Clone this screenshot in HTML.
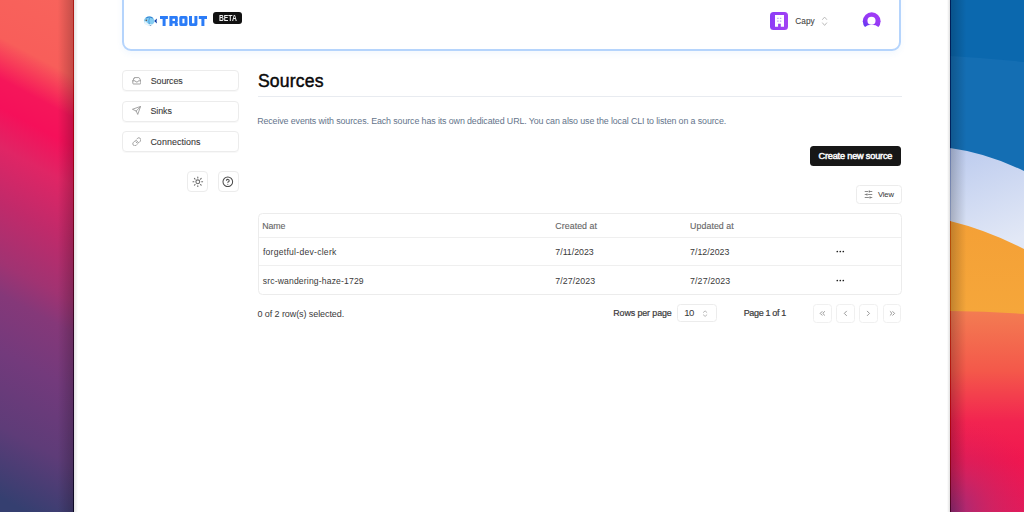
<!DOCTYPE html>
<html><head><meta charset="utf-8">
<style>
*{box-sizing:border-box;margin:0;padding:0}
html,body{width:1024px;height:512px;overflow:hidden;background:#fff;font-family:"Liberation Sans",sans-serif;}
.abs{position:absolute}
#wl{position:absolute;left:0;top:0;width:74px;height:512px}
#wr{position:absolute;left:950px;top:0;width:74px;height:512px}
#panel{position:absolute;left:74px;top:0;width:876px;height:512px;background:#fff}
#hdr{position:absolute;left:122.3px;top:-20px;width:778.9px;height:71.4px;border:2px solid #b5d4fc;border-radius:9px;background:#fff;box-shadow:0 3px 6px rgba(59,130,246,0.06)}
.nav{position:absolute;left:122px;width:117px;height:21px;border:1px solid #ececec;border-radius:4px;box-shadow:0 1px 1px rgba(0,0,0,0.03)}
.nav span{position:absolute;left:28px;top:4.6px;font-size:8.6px;color:#3a3a3a;white-space:nowrap}
.nav svg{position:absolute;left:9px;top:5px}
.ib{position:absolute;top:171px;width:21px;height:21px;border:1px solid #ececec;border-radius:4px}
.txt{position:absolute;white-space:nowrap;line-height:1}
</style></head><body>
<svg id="wl" width="74" height="512" viewBox="0 0 74 512">
  <defs>
    <linearGradient id="lg1" gradientUnits="userSpaceOnUse" x1="18.8" y1="-35.2" x2="-206.8" y2="387.2">
      <stop offset="0" stop-color="#f8645c"/>
      <stop offset="0.152" stop-color="#f85e5a"/>
      <stop offset="0.19" stop-color="#f73a59"/>
      <stop offset="0.228" stop-color="#f5165a"/>
      <stop offset="0.281" stop-color="#f5105a"/>
      <stop offset="0.354" stop-color="#e02565"/>
      <stop offset="0.458" stop-color="#c02a6a"/>
      <stop offset="0.567" stop-color="#a03372"/>
      <stop offset="0.625" stop-color="#853879"/>
      <stop offset="0.731" stop-color="#733a7c"/>
      <stop offset="0.869" stop-color="#5e3c78"/>
      <stop offset="0.933" stop-color="#4a3d74"/>
      <stop offset="1" stop-color="#353f70"/>
    </linearGradient>
    <linearGradient id="lsh" x1="0" y1="0" x2="1" y2="0">
      <stop offset="0" stop-color="#000" stop-opacity="0"/>
      <stop offset="0.78" stop-color="#000" stop-opacity="0"/>
      <stop offset="1" stop-color="#000" stop-opacity="0.22"/>
    </linearGradient>
    <filter id="dk2" x="0" y="0" width="1" height="1" color-interpolation-filters="sRGB">
      <feComponentTransfer>
        <feFuncR type="gamma" amplitude="0.72" exponent="2.0" offset="0"/>
        <feFuncG type="gamma" amplitude="0.72" exponent="2.0" offset="0"/>
        <feFuncB type="gamma" amplitude="0.72" exponent="2.0" offset="0"/>
      </feComponentTransfer>
    </filter>
    <clipPath id="lline"><rect x="73" y="0" width="1" height="512"/></clipPath>
  </defs>
  <rect id="wpl" width="74" height="512" fill="url(#lg1)"/>
  <rect width="74" height="512" fill="url(#lsh)"/>
  <g clip-path="url(#lline)"><use href="#wpl" filter="url(#dk2)"/></g>
</svg>
<svg id="wr" width="74" height="512" viewBox="0 0 74 512">
  <defs>
    <linearGradient id="rsh" x1="0" y1="0" x2="1" y2="0">
      <stop offset="0" stop-color="#000" stop-opacity="0.22"/>
      <stop offset="0.22" stop-color="#000" stop-opacity="0"/>
      <stop offset="1" stop-color="#000" stop-opacity="0"/>
    </linearGradient>
    <linearGradient id="rlav" gradientUnits="userSpaceOnUse" x1="0" y1="150" x2="40" y2="250">
      <stop offset="0" stop-color="#bccbee"/>
      <stop offset="1" stop-color="#e2e8f6"/>
    </linearGradient>
    <linearGradient id="rora" x1="0" y1="0" x2="0" y2="1">
      <stop offset="0" stop-color="#f4a036"/>
      <stop offset="1" stop-color="#f8b444"/>
    </linearGradient>
    <linearGradient id="rred" gradientUnits="userSpaceOnUse" x1="0" y1="311" x2="0" y2="512">
      <stop offset="0" stop-color="#f37c52"/>
      <stop offset="0.3" stop-color="#f4584a"/>
      <stop offset="0.55" stop-color="#f22450"/>
      <stop offset="0.75" stop-color="#f0164f"/>
      <stop offset="1" stop-color="#e41a5a"/>
    </linearGradient>
    <radialGradient id="rbot" gradientUnits="userSpaceOnUse" cx="0" cy="512" r="95">
      <stop offset="0" stop-color="#9a2c7a" stop-opacity="1"/>
      <stop offset="0.45" stop-color="#c02868" stop-opacity="0.55"/>
      <stop offset="1" stop-color="#e01c58" stop-opacity="0"/>
    </radialGradient>
    <filter id="dk" x="0" y="0" width="1" height="1" color-interpolation-filters="sRGB">
      <feComponentTransfer>
        <feFuncR type="gamma" amplitude="0.78" exponent="2.1" offset="0"/>
        <feFuncG type="gamma" amplitude="0.78" exponent="2.1" offset="0"/>
        <feFuncB type="gamma" amplitude="0.78" exponent="2.1" offset="0"/>
      </feComponentTransfer>
    </filter>
    <clipPath id="rline"><rect x="0" y="0" width="1" height="512"/></clipPath>
  </defs>
  <g id="wpr">
  <rect width="74" height="512" fill="#0b68ae"/>
  <path d="M0 56 Q37 58 74 62 L74 512 L0 512Z" fill="#146eb3"/>
  <path d="M0 148 Q37 153 74 171 L74 512 L0 512Z" fill="url(#rlav)"/>
  <path d="M0 221 Q37 230 74 249 L74 512 L0 512Z" fill="url(#rora)"/>
  <path d="M0 311 Q37 311 74 314 L74 512 L0 512Z" fill="url(#rred)"/>
  <rect y="300" width="74" height="212" fill="url(#rbot)"/>
  </g>
  <rect width="74" height="512" fill="url(#rsh)"/>
  <g clip-path="url(#rline)"><use href="#wpr" filter="url(#dk)"/></g>
</svg>

<div id="panel"></div>
<div class="abs" style="left:946.5px;top:0;width:3.5px;height:512px;background:linear-gradient(90deg,rgba(0,0,0,0),rgba(0,0,0,0.12))"></div>
<div class="abs" style="left:74px;top:0;width:3.5px;height:512px;background:linear-gradient(270deg,rgba(0,0,0,0),rgba(0,0,0,0.11))"></div>
<div id="hdr"></div>

<!-- sidebar -->
<div class="nav" style="top:70.2px"></div>
<div class="txt" style="left:150.82px;top:76.9px;font-size:8.9px;color:#3a3a3a;letter-spacing:-0.112px;-webkit-text-stroke:0.1px #3a3a3a">Sources</div>
<svg class="abs" style="left:131.9px;top:76px" width="9.6" height="9.6" viewBox="0 0 24 24" fill="none" stroke="#8a8a8a" stroke-width="2" stroke-linecap="round" stroke-linejoin="round"><polyline points="22 12 16 12 14 15 10 15 8 12 2 12"/><path d="M5.45 5.11 2 12v6a2 2 0 0 0 2 2h16a2 2 0 0 0 2-2v-6l-3.45-6.89A2 2 0 0 0 16.76 4H7.24a2 2 0 0 0-1.79 1.11z"/></svg>
<div class="nav" style="top:100.8px"></div>
<div class="txt" style="left:150.52px;top:107.2px;font-size:8.9px;color:#3a3a3a;letter-spacing:-0.075px;-webkit-text-stroke:0.1px #3a3a3a">Sinks</div>
<svg class="abs" style="left:132.3px;top:106.4px" width="9.2" height="9.2" viewBox="0 0 24 24" fill="none" stroke="#8a8a8a" stroke-width="2" stroke-linecap="round" stroke-linejoin="round"><path d="m22 2-7 20-4-9-9-4Z"/><path d="M22 2 11 13"/></svg>
<div class="nav" style="top:131.2px"></div>
<div class="txt" style="left:150.4px;top:137.7px;font-size:8.9px;color:#3a3a3a;letter-spacing:0.07px;-webkit-text-stroke:0.1px #3a3a3a">Connections</div>
<svg class="abs" style="left:131.75px;top:136.65px" width="9.7" height="9.7" viewBox="0 0 24 24" fill="none" stroke="#8a8a8a" stroke-width="2" stroke-linecap="round" stroke-linejoin="round"><path d="M10 13a5 5 0 0 0 7.54.54l3-3a5 5 0 0 0-7.07-7.07l-1.72 1.71"/><path d="M14 11a5 5 0 0 0-7.54-.54l-3 3a5 5 0 0 0 7.07 7.07l1.71-1.71"/></svg>
<div class="ib" style="left:187.3px"></div>
<svg class="abs" style="left:192px;top:175.5px" width="11.6" height="11.6" viewBox="0 0 24 24" fill="none" stroke="#6a6a6a" stroke-width="2.2" stroke-linecap="round" stroke-linejoin="round"><circle cx="12" cy="12" r="4"/><path d="M12 2v2"/><path d="M12 20v2"/><path d="m4.93 4.93 1.41 1.41"/><path d="m17.66 17.66 1.41 1.41"/><path d="M2 12h2"/><path d="M20 12h2"/><path d="m6.34 17.66-1.41 1.41"/><path d="m19.07 4.93-1.41 1.41"/></svg>
<div class="ib" style="left:218px"></div>
<svg class="abs" style="left:222.1px;top:175.8px" width="11.6" height="11.6" viewBox="0 0 24 24" fill="none" stroke="#4a4a4a" stroke-width="2.1" stroke-linecap="round" stroke-linejoin="round"><circle cx="12" cy="12" r="10"/><path d="M9.09 9a3 3 0 0 1 5.83 1c0 2-3 3-3 3"/><path d="M12 17h.01"/></svg>

<!-- header -->
<svg class="abs" style="left:143px;top:15px" width="15" height="12" viewBox="0 0 15 12">
  <path d="M11 5.9 L14 3.6 Q13.1 5.9 14 8.4Z" fill="#0c3aa6"/>
  <ellipse cx="6.2" cy="5.9" rx="5.3" ry="4.5" fill="#86cdf2"/>
  <path d="M2.6 3 Q6.2 0.2 10.2 3 Q9.8 3.6 9.2 3.4 Q6.2 1.6 3.4 3.6Z" fill="#2f7fd0"/>
  <path d="M1 6.4 Q1.5 10.4 6 10.4 Q8.5 10.3 9.5 9.2 Q5.5 9.6 3.8 7.4 Q2.5 6 1 6.4Z" fill="#eaf5fb"/>
  <path d="M6.6 2.6 Q5.1 5.9 6.4 9.2" stroke="#4aa0e0" stroke-width="1" fill="none"/>
  <circle cx="3.3" cy="5.3" r="0.8" fill="#6a4a3a"/>
  <path d="M6.5 10.2 Q7.5 11.2 8.6 10.1Z" fill="#2a5a9a"/>
</svg>
<svg class="abs" style="left:160px;top:16.3px" width="48" height="10.3" viewBox="0 0 48 10" preserveAspectRatio="none"><path fill="#2b7cf7" fill-rule="evenodd" d="M0 0H7.9V2.8H5.6V9.6H2.6V2.8H0Z M9.4 0H16.4Q17.8 0 17.8 1.4V5.1Q17.8 5.8 17.1 6.1Q17.8 6.4 17.8 7.1V9.6H14.8V7.2H12.5V9.6H9.4Z M12.5 2.6H15V4.8H12.5Z M20.8 0H26Q27.5 0 27.5 1.5V8.1Q27.5 9.6 26 9.6H20.8Q19.3 9.6 19.3 8.1V1.5Q19.3 0 20.8 0Z M22.4 2.6V7H24.5V2.6Z M29 0H32V7H34.4V0H37.4V8.1Q37.4 9.6 35.9 9.6H30.5Q29 9.6 29 8.1Z M38.8 0H47V2.8H44.4V9.6H41.4V2.8H38.8Z"/></svg>
<div class="abs" style="left:212.6px;top:12.3px;width:29.4px;height:11.7px;background:#111;border-radius:3px"></div>
<div class="txt" style="left:218.6px;top:15.2px;font-size:8.2px;font-weight:bold;color:#f0f0f0;letter-spacing:0px;transform:scaleX(0.82);transform-origin:0 0">BETA</div>

<div class="abs" style="left:770px;top:12.2px;width:18px;height:18px;border-radius:3.5px;background:linear-gradient(100deg,#8b3cf7,#a443f3)">
<svg width="18" height="18" viewBox="0 0 18 18" style="position:absolute;left:0;top:0">
  <path d="M5 2.9 H14 V14.7 H10.8 V11.8 H8.1 V14.7 H5 Z" fill="#fff"/>
  <rect x="7.2" y="5.8" width="1.4" height="1" fill="#a98af5"/>
  <rect x="9.9" y="5.8" width="1.4" height="1" fill="#a98af5"/>
  <rect x="7.2" y="8.6" width="1.4" height="1" fill="#a98af5"/>
  <rect x="9.9" y="8.6" width="1.4" height="1" fill="#a98af5"/>
</svg></div>
<div class="txt" style="left:795.22px;top:17.0px;font-size:8.3px;color:#444;letter-spacing:0.033px;-webkit-text-stroke:0.08px #444">Capy</div>
<svg class="abs" style="left:820px;top:15px" width="9" height="12" viewBox="0 0 9 12">
  <path d="M2.5 4.5 L4.6 2.1 L6.7 4.5 M2.5 7.9 L4.6 10.4 L6.7 7.9" stroke="#b0b0b0" stroke-width="0.85" fill="none" stroke-linecap="round" stroke-linejoin="round"/>
</svg>
<svg class="abs" style="left:862px;top:12px" width="19" height="19" viewBox="0 0 19 19">
  <defs>
    <linearGradient id="av" x1="0.7" y1="0" x2="0.1" y2="0.9">
      <stop offset="0" stop-color="#a33cf6"/>
      <stop offset="0.55" stop-color="#9238f5"/>
      <stop offset="1" stop-color="#5238f0"/>
    </linearGradient>
  </defs>
  <circle cx="9.7" cy="9.2" r="8.9" fill="url(#av)"/>
  <circle cx="9.5" cy="8.7" r="4.05" fill="#fff"/>
  <ellipse cx="9.7" cy="21" rx="10" ry="8.2" fill="#fff"/>
</svg>

<!-- main -->
<div class="txt" style="left:257.9px;top:72.6px;font-size:17.6px;color:#0a0a0a;letter-spacing:0.2px;-webkit-text-stroke:0.45px #0a0a0a">Sources</div>
<div class="abs" style="left:258px;top:96px;width:644px;height:1px;background:#e8ebf0"></div>
<div class="txt" style="left:257.15px;top:117.0px;font-size:8.9px;color:#64748b;letter-spacing:-0.116px">Receive events with sources. Each source has its own dedicated URL. You can also use the local CLI to listen on a source.</div>

<!-- actions -->
<div class="abs" style="left:810px;top:146.2px;width:91.2px;height:20px;background:#171717;border-radius:3.5px"></div>
<div class="txt" style="left:818.5px;top:152.1px;font-size:9.2px;color:#fafafa;letter-spacing:-0.2px;-webkit-text-stroke:0.5px #fafafa">Create new source</div>
<div class="abs" style="left:856.2px;top:185.4px;width:45.4px;height:18.5px;border:1px solid #ececec;border-radius:3.5px"></div>
<svg class="abs" style="left:863.5px;top:190.3px" width="9" height="9" viewBox="0 0 24 24" fill="none" stroke="#666" stroke-width="2" stroke-linecap="round" stroke-linejoin="round"><line x1="21" x2="14" y1="4" y2="4"/><line x1="10" x2="3" y1="4" y2="4"/><line x1="21" x2="12" y1="12" y2="12"/><line x1="8" x2="3" y1="12" y2="12"/><line x1="21" x2="16" y1="20" y2="20"/><line x1="12" x2="3" y1="20" y2="20"/><line x1="14" x2="14" y1="2" y2="6"/><line x1="8" x2="8" y1="10" y2="14"/><line x1="16" x2="16" y1="18" y2="22"/></svg>
<div class="txt" style="left:877.9px;top:191.1px;font-size:7.6px;color:#3a3a3a;letter-spacing:-0.092px;-webkit-text-stroke:0.05px #3a3a3a">View</div>

<!-- table -->
<div class="abs" style="left:258px;top:213px;width:643.6px;height:81.9px;border:1px solid #ececec;border-radius:4.5px"></div>
<div class="abs" style="left:259px;top:237px;width:642px;height:1px;background:#efefef"></div>
<div class="abs" style="left:259px;top:265px;width:642px;height:1px;background:#efefef"></div>
<div class="txt" style="left:262.15px;top:221.55px;font-size:8.8px;color:#666;letter-spacing:-0.092px;-webkit-text-stroke:0.12px #666">Name</div>
<div class="txt" style="left:555.33px;top:221.55px;font-size:8.8px;color:#666;letter-spacing:0.064px;-webkit-text-stroke:0.12px #666">Created at</div>
<div class="txt" style="left:690.08px;top:221.55px;font-size:8.8px;color:#666;letter-spacing:0.069px;-webkit-text-stroke:0.12px #666">Updated at</div>
<div class="txt" style="left:262.88px;top:247.92px;font-size:8.6px;color:#3a3a3a;letter-spacing:0.26px">forgetful-dev-clerk</div>
<div class="txt" style="left:555.33px;top:247.85px;font-size:8.8px;color:#3a3a3a;letter-spacing:-0.019px">7/11/2023</div>
<div class="txt" style="left:690.02px;top:247.85px;font-size:8.8px;color:#3a3a3a;letter-spacing:0.028px">7/12/2023</div>
<div class="txt" style="left:262.75px;top:276.62px;font-size:8.6px;color:#3a3a3a;letter-spacing:0.157px">src-wandering-haze-1729</div>
<div class="txt" style="left:555.33px;top:276.65px;font-size:8.8px;color:#3a3a3a;letter-spacing:0.091px">7/27/2023</div>
<div class="txt" style="left:690.02px;top:276.65px;font-size:8.8px;color:#3a3a3a;letter-spacing:0.128px">7/27/2023</div>
<svg class="abs" style="left:836px;top:250px" width="9" height="3" viewBox="0 0 9 3"><circle cx="1.3" cy="1.5" r="0.85" fill="#222"/><circle cx="4.3" cy="1.5" r="0.85" fill="#222"/><circle cx="7.3" cy="1.5" r="0.85" fill="#222"/></svg>
<svg class="abs" style="left:836px;top:278.5px" width="9" height="3" viewBox="0 0 9 3"><circle cx="1.3" cy="1.5" r="0.85" fill="#222"/><circle cx="4.3" cy="1.5" r="0.85" fill="#222"/><circle cx="7.3" cy="1.5" r="0.85" fill="#222"/></svg>

<!-- footer -->
<div class="txt" style="left:257.52px;top:309.6px;font-size:9.0px;color:#3a3a3a;letter-spacing:-0.085px">0 of 2 row(s) selected.</div>
<div class="txt" style="left:613.25px;top:309.3px;font-size:8.9px;color:#3a3a3a;letter-spacing:-0.1px;-webkit-text-stroke:0.2px #3a3a3a">Rows per page</div>
<div class="abs" style="left:676.5px;top:304px;width:40.8px;height:18.4px;border:1px solid #ececec;border-radius:3.5px"></div>
<div class="txt" style="left:684.3px;top:308.1px;font-size:9.6px;color:#3a3a3a;letter-spacing:-0.55px">10</div>
<svg class="abs" style="left:702px;top:310px" width="6" height="8" viewBox="0 0 6 8"><path d="M1.4 2.4 L3.1 0.9 L4.8 2.4 M1.4 4.9 L3.1 6.4 L4.8 4.9" stroke="#9a9a9a" stroke-width="0.7" fill="none" stroke-linecap="round" stroke-linejoin="round"/></svg>
<div class="txt" style="left:743.65px;top:309.4px;font-size:9.0px;color:#3a3a3a;letter-spacing:-0.338px;-webkit-text-stroke:0.2px #3a3a3a">Page 1 of 1</div>
<div class="abs" style="left:813.3px;top:304px;width:18.4px;height:18.6px;border:1px solid #f0f0f0;border-radius:3.5px"></div>
<div class="abs" style="left:836.3px;top:304px;width:18.4px;height:18.6px;border:1px solid #f0f0f0;border-radius:3.5px"></div>
<div class="abs" style="left:859.4px;top:304px;width:18.6px;height:18.6px;border:1px solid #f0f0f0;border-radius:3.5px"></div>
<div class="abs" style="left:883px;top:304px;width:18.4px;height:18.6px;border:1px solid #f0f0f0;border-radius:3.5px"></div>
<svg class="abs" style="left:817.6px;top:309px" width="8.8" height="8.8" viewBox="0 0 24 24" fill="none" stroke="#7a7a7a" stroke-width="2.1" stroke-linecap="round" stroke-linejoin="round"><path d="m11 17-5-5 5-5"/><path d="m18 17-5-5 5-5"/></svg>
<svg class="abs" style="left:840.8px;top:309px" width="8.8" height="8.8" viewBox="0 0 24 24" fill="none" stroke="#7a7a7a" stroke-width="2.1" stroke-linecap="round" stroke-linejoin="round"><path d="m15 18-6-6 6-6"/></svg>
<svg class="abs" style="left:864.3px;top:309px" width="8.8" height="8.8" viewBox="0 0 24 24" fill="none" stroke="#7a7a7a" stroke-width="2.1" stroke-linecap="round" stroke-linejoin="round"><path d="m9 18 6-6-6-6"/></svg>
<svg class="abs" style="left:887.8px;top:309px" width="8.8" height="8.8" viewBox="0 0 24 24" fill="none" stroke="#7a7a7a" stroke-width="2.1" stroke-linecap="round" stroke-linejoin="round"><path d="m6 17 5-5-5-5"/><path d="m13 17 5-5-5-5"/></svg>

</body></html>
